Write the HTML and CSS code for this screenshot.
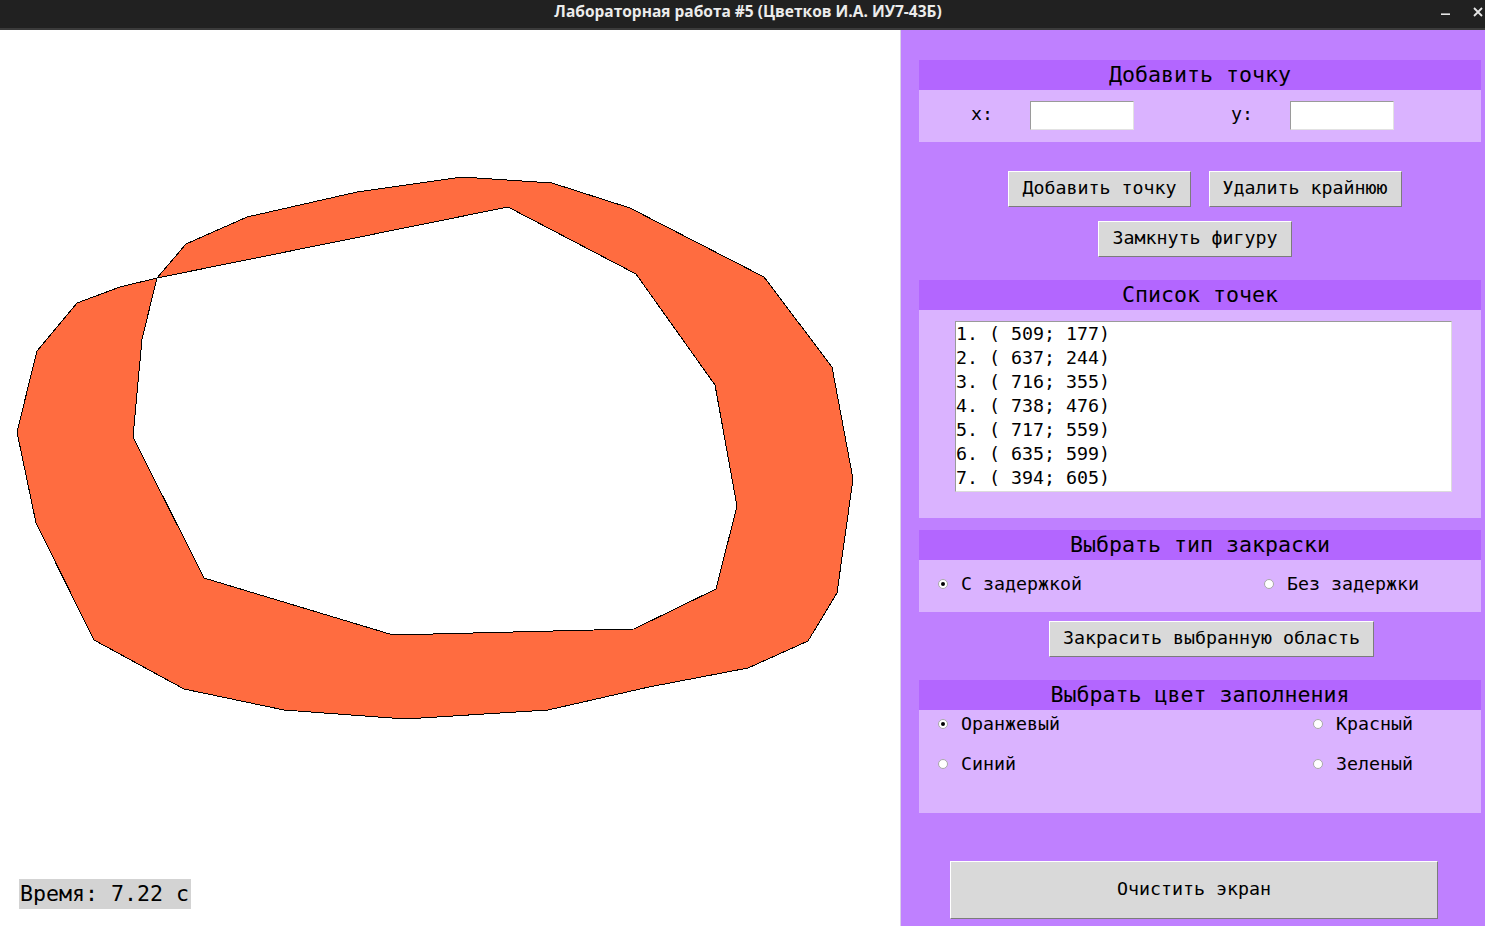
FILE: index.html
```html
<!DOCTYPE html>
<html lang="ru">
<head>
<meta charset="utf-8">
<title>Лабораторная работа #5</title>
<link rel="stylesheet" href="styles.css">
</head>
<body>
<div class="titlebar">
  <div></div>
  <div class="title">Лабораторная работа #5 (Цветков И.А. ИУ7-43Б)</div>
  <div class="wm">
    <svg width="12" height="12" viewBox="0 0 12 12"><rect x="1" y="7.4" width="9" height="1.6" fill="#e6e6e6"/></svg>
    <svg width="12" height="12" viewBox="0 0 12 12"><path d="M2 2 L10 10 M10 2 L2 10" stroke="#e6e6e6" stroke-width="1.8"/></svg>
  </div>
</div>
<div class="main">
  <div class="canvas">
    <svg class="drawing" width="900" height="896" viewBox="0 0 900 896">
      <path fill="#ff6c40" fill-rule="evenodd" stroke="#000" stroke-width="1" shape-rendering="crispEdges"
        d="M462 147 L552 153 L630 178 L764 247 L832 337 L853 449 L837 563 L808 611 L748 638 L649 657 L548 680 L405 689 L284 680 L184 659 L94 610 L36 493 L17 402 L37 321 L77 273 L120 257 L157 248 L186 214 L247 187 L357 162 Z
           M508 177 L636 244 L715 355 L737 476 L716 559 L634 599 L393 605 L204 548 L133 407 L142 309 L157 248 Z"/>
    </svg>
    <div class="time">Время: 7.22 с</div>
  </div>
  <div class="panel">
    <section class="group g-add">
      <div class="group-head">Добавить точку</div>
      <div class="group-body coords">
        <span class="lbl">x:</span>
        <div class="entry"></div>
        <span class="lbl lbl-y">y:</span>
        <div class="entry"></div>
      </div>
    </section>
    <div class="btn-row row1">
      <button class="btn">Добавить точку</button>
      <button class="btn">Удалить крайнюю</button>
    </div>
    <div class="btn-row row2">
      <button class="btn">Замкнуть фигуру</button>
    </div>
    <section class="group g-list">
      <div class="group-head">Список точек</div>
      <div class="group-body list-body">
        <div class="listbox">
          <div class="item">1. ( 509; 177)</div>
          <div class="item">2. ( 637; 244)</div>
          <div class="item">3. ( 716; 355)</div>
          <div class="item">4. ( 738; 476)</div>
          <div class="item">5. ( 717; 559)</div>
          <div class="item">6. ( 635; 599)</div>
          <div class="item">7. ( 394; 605)</div>
        </div>
      </div>
    </section>
    <section class="group g-type">
      <div class="group-head">Выбрать тип закраски</div>
      <div class="group-body type-body">
        <div class="radio"><span class="dot on"></span><span class="rtext">С задержкой</span></div>
        <div class="radio"><span class="dot"></span><span class="rtext">Без задержки</span></div>
      </div>
    </section>
    <div class="btn-row fill-row">
      <button class="btn">Закрасить выбранную область</button>
    </div>
    <section class="group g-color">
      <div class="group-head">Выбрать цвет заполнения</div>
      <div class="group-body color-body">
        <div class="radio"><span class="dot on"></span><span class="rtext">Оранжевый</span></div>
        <div class="radio"><span class="dot"></span><span class="rtext">Красный</span></div>
        <div class="radio"><span class="dot"></span><span class="rtext">Синий</span></div>
        <div class="radio"><span class="dot"></span><span class="rtext">Зеленый</span></div>
      </div>
    </section>
    <div class="btn-row clear-row">
      <button class="btn btn-clear">Очистить экран</button>
    </div>
  </div>
</div>
</body>
</html>
```
FILE: styles.css
```css
html, body {
  margin: 0;
  padding: 0;
}
body {
  width: 1485px;
  height: 926px;
  overflow: hidden;
  font-family: "DejaVu Sans Mono", monospace;
  color: #000;
}
.titlebar {
  height: 28px;
  background: #212121;
  border-bottom: 2px solid #3b3b3b;
  display: grid;
  grid-template-columns: 70px 1fr 70px;
  align-items: start;
}
.title {
  text-align: center;
  color: #ececec;
  font: 700 15.5px "Open Sans", "DejaVu Sans", sans-serif;
  line-height: 20px;
  padding-top: 1px;
  padding-left: 11px;
  white-space: pre;
}
.wm {
  display: flex;
  justify-content: flex-end;
  align-items: center;
  gap: 20px;
  padding-top: 6px;
  padding-right: 1px;
}
.wm svg {
  display: block;
}
.main {
  display: flex;
  height: 896px;
}
.canvas {
  position: relative;
  width: 900px;
  height: 896px;
  background: #fff;
}
.drawing {
  display: block;
}
.time {
  position: absolute;
  left: 19px;
  top: 849px;
  width: 171px;
  height: 30px;
  padding-left: 1px;
  background: #d3d3d3;
  font-size: 21.6px;
  line-height: 30px;
  white-space: pre;
}
.panel {
  flex: 1;
  background: #bf80ff;
  border-left: 1px solid #d9d0e6;
  padding: 30px 4px 0 18px;
}
.group-head {
  height: 30px;
  line-height: 30px;
  background: #b366ff;
  font-size: 21.6px;
  text-align: center;
  white-space: pre;
}
.group-body {
  background: #dab3ff;
}
.coords {
  height: 52px;
  box-sizing: border-box;
  display: flex;
  align-items: center;
  padding-left: 52px;
  padding-bottom: 2px;
  font-size: 18.3px;
}
.lbl {
  width: 59px;
  line-height: 20px;
  margin-top: -3px;
}
.lbl-y {
  margin-left: 97px;
}
.entry {
  width: 104px;
  height: 29px;
  box-sizing: border-box;
  background: #fff;
  border: 1px solid;
  border-color: #9a9a9a #e2e2e2 #e2e2e2 #9a9a9a;
}
.btn-row {
  display: flex;
  justify-content: center;
}
.row1 {
  margin-top: 29px;
  gap: 18px;
  padding-left: 10px;
}
.row2 {
  margin-top: 14px;
  padding-right: 10px;
}
.btn {
  height: 36px;
  box-sizing: border-box;
  padding: 0 13px 3px;
  margin: 0;
  font-family: "DejaVu Sans Mono", monospace;
  font-size: 18.3px;
  line-height: 20px;
  color: #000;
  background: #d9d9d9;
  border: 1px solid;
  border-color: #ffffff #7c7c7c #7c7c7c #ffffff;
  white-space: pre;
}
.g-list {
  margin-top: 23px;
}
.list-body {
  height: 208px;
  padding-top: 11px;
  padding-left: 36px;
  box-sizing: border-box;
}
.listbox {
  width: 497px;
  height: 171px;
  box-sizing: border-box;
  background: #fff;
  border: 1px solid;
  border-color: #9a9a9a #dcdcdc #dcdcdc #9a9a9a;
  font-size: 18.3px;
  line-height: 24px;
}
.item {
  white-space: pre;
  height: 24px;
}
.g-type {
  margin-top: 12px;
}
.type-body {
  height: 52px;
  box-sizing: border-box;
  display: grid;
  grid-template-columns: 326px auto;
  align-items: center;
  padding: 0 0 4px 19px;
  font-size: 18.3px;
}
.radio {
  display: flex;
  align-items: center;
  gap: 13px;
  white-space: pre;
}
.rtext {
  line-height: 20px;
}
.dot {
  width: 10px;
  height: 10px;
  box-sizing: border-box;
  border-radius: 50%;
  background: #fff;
  border: 1px solid #a8a8a8;
  display: flex;
  align-items: center;
  justify-content: center;
}
.dot.on::after {
  content: "";
  width: 4px;
  height: 4px;
  border-radius: 50%;
  background: #000;
}
.fill-row {
  margin-top: 9px;
  padding-left: 23px;
}
.g-color {
  margin-top: 23px;
}
.color-body {
  height: 103px;
  box-sizing: border-box;
  display: grid;
  grid-template-columns: 375px auto;
  grid-auto-rows: 24px;
  row-gap: 16px;
  align-items: center;
  padding: 2px 0 0 19px;
  font-size: 18.3px;
}
.clear-row {
  margin-top: 48px;
  padding-right: 12px;
}
.btn-clear {
  width: 488px;
  height: 58px;
}
```
